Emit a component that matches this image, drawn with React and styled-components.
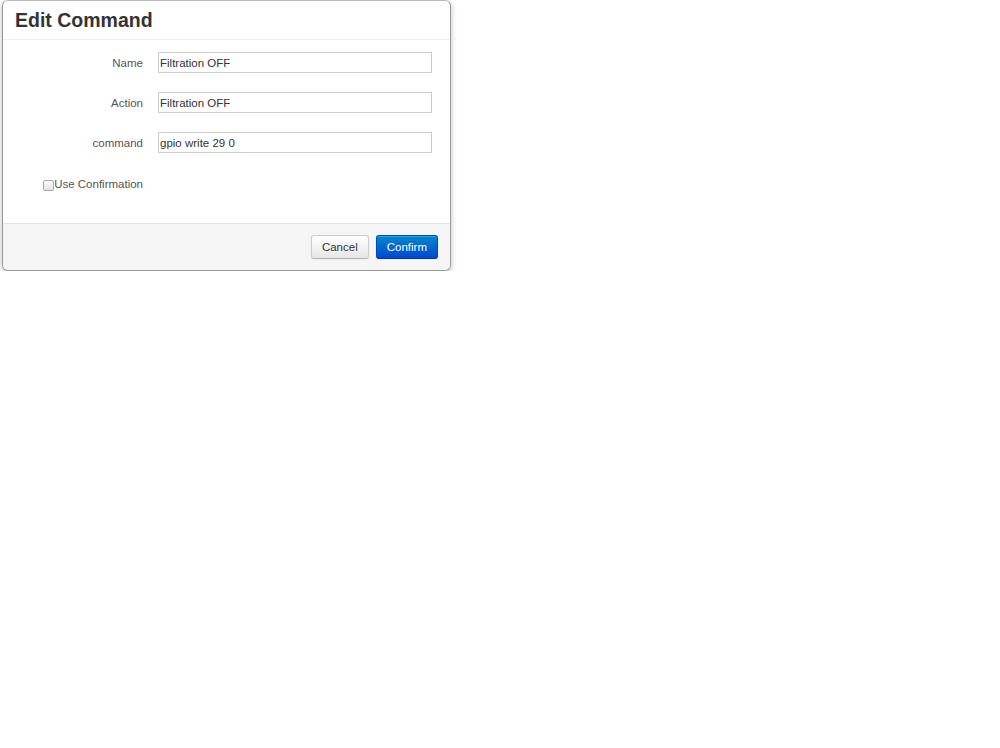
import React, { useState } from "react";
import styled, { createGlobalStyle } from "styled-components";

const GlobalStyle = createGlobalStyle`
  html, body {
    margin: 0;
    padding: 0;
    background: #fff;
    font-family: "Liberation Sans", Arial, sans-serif;
  }
`;

const Page = styled.div`
  padding: 0 0 0 2px;
`;

const Modal = styled.div`
  width: 449px;
  box-sizing: border-box;
  background: #fff;
  border: 1px solid #999;
  border-top-color: #bbb;
  border-radius: 6px;
  box-shadow: 0 2px 6px rgba(0, 0, 0, 0.25);
  overflow: hidden;
`;

const Header = styled.div`
  height: 38px;
  padding: 0 12px;
  border-bottom: 1px solid #eee;
  display: flex;
  align-items: center;
`;

const Title = styled.h3`
  margin: 0;
  font-size: 19.5px;
  font-weight: bold;
  color: #333;
`;

const Body = styled.form`
  padding: 12px 17px 20px 15px;
  height: 151px;
  display: flex;
  flex-direction: column;
  gap: 19px;
`;

const Row = styled.div`
  display: flex;
  align-items: center;
  gap: 15px;
  margin-top: ${(p) => (p.shift ? "5px" : "0")};
`;

const Label = styled.label`
  width: 125px;
  text-align: right;
  font-size: 11.5px;
  color: #555;
  display: flex;
  align-items: center;
  justify-content: flex-end;
`;

const Input = styled.input`
  width: 274px;
  height: 21px;
  box-sizing: border-box;
  border: 1px solid #ccc;
  padding: 0 1px;
  font-family: "Liberation Sans", Arial, sans-serif;
  font-size: 11.5px;
  color: #333;
  outline: none;
`;

const Check = styled.input`
  margin: 3px 0 0 0;
  width: 11px;
  height: 11px;
  appearance: none;
  border: 1px solid #aaa;
  border-radius: 2px;
  background: linear-gradient(#fafafa, #e4e4e4);
`;

const Footer = styled.div`
  background: #f5f5f5;
  border-top: 1px solid #e5e5e5;
  height: 46px;
  padding: 0 12px;
  display: flex;
  align-items: center;
  justify-content: flex-end;
  gap: 7px;
`;

const Button = styled.button`
  height: 24px;
  padding: 0 10px;
  font-family: "Liberation Sans", Arial, sans-serif;
  font-size: 11.5px;
  border-radius: 3px;
  cursor: pointer;
  color: ${(p) => (p.$primary ? "#fff" : "#333")};
  border: 1px solid ${(p) => (p.$primary ? "#0048c0" : "#ccc")};
  border-bottom-color: ${(p) => (p.$primary ? "#003a9c" : "#b3b3b3")};
  background: ${(p) =>
    p.$primary
      ? "linear-gradient(#0088cc, #0048cc)"
      : "linear-gradient(#ffffff, #e6e6e6)"};
  box-shadow: inset 0 1px 0 rgba(255, 255, 255, 0.2), 0 1px 2px rgba(0, 0, 0, 0.05);
`;

const fields = [
  { label: "Name", value: "Filtration OFF" },
  { label: "Action", value: "Filtration OFF" },
  { label: "command", value: "gpio write 29 0" },
];

const App = () => {
  const [values, setValues] = useState(fields.map((f) => f.value));

  const handleChange = (i) => (e) => {
    const next = [...values];
    next[i] = e.target.value;
    setValues(next);
  };

  return (
    <Page>
      <GlobalStyle />
      <Modal>
        <Header>
          <Title>Edit Command</Title>
        </Header>
        <Body>
          {fields.map((f, i) => (
            <Row key={f.label}>
              <Label>{f.label}</Label>
              <Input value={values[i]} onChange={handleChange(i)} />
            </Row>
          ))}
          <Row shift>
            <Label>
              <Check type="checkbox" />
              Use Confirmation
            </Label>
          </Row>
        </Body>
        <Footer>
          <Button type="button">Cancel</Button>
          <Button type="button" $primary>
            Confirm
          </Button>
        </Footer>
      </Modal>
    </Page>
  );
};

export default App;
